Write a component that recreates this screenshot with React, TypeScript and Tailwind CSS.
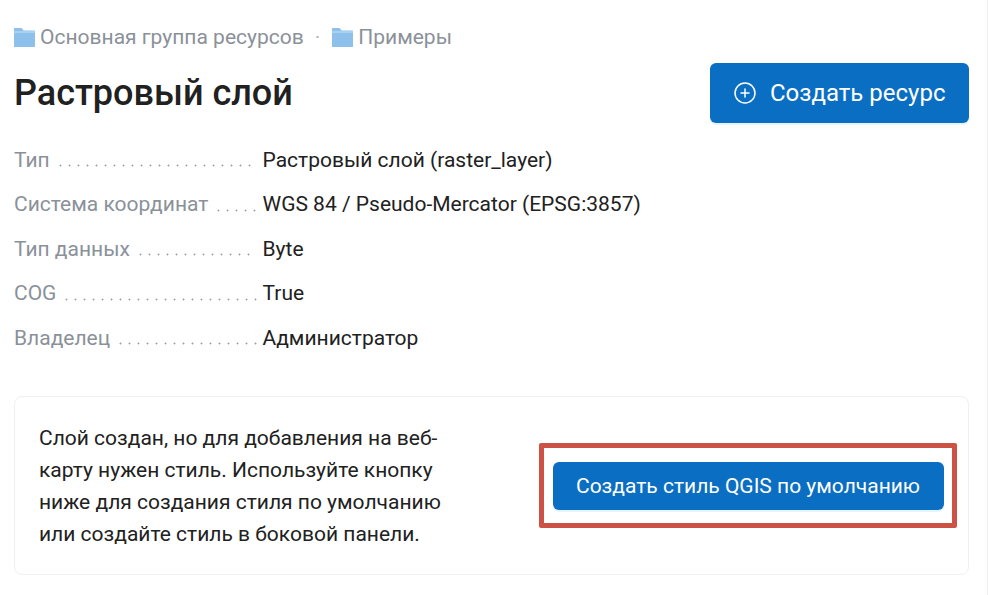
import React from "react";
import { CirclePlus } from "lucide-react";

function Folder() {
  return (
    <svg width="21" height="19" viewBox="0 0 21 19" className="shrink-0">
      <path d="M.6 0H7.6l2 2.4H20.4a.6.6 0 0 1 .6.6V18.4a.6.6 0 0 1-.6.6H.6a.6.6 0 0 1-.6-.6V.6A.6.6 0 0 1 .6 0z" fill="#8dc1ec" />
      <path d="M0 4h21" stroke="#d5e8f8" strokeWidth="0.8" />
    </svg>
  );
}

function Row({ label, value, dots }: { label: string; value: string; dots: string }) {
  return (
    <div className="flex h-[44.5px] items-center">
      <div className="flex w-[248.5px] items-center justify-between">
        <span className="whitespace-nowrap text-[#8a9199]">{label}</span>
        <span
          className={`mt-[12px] h-[3px] bg-[radial-gradient(circle_at_1.5px_1.5px,#959da5_0.8px,transparent_1.15px)] bg-[length:9px_3px] ${dots}`}
        />
      </div>
      <span className="text-[#212121]">{value}</span>
    </div>
  );
}

export default function App() {
  return (
    <div className="relative h-[595px] w-[988px] overflow-hidden border-r border-[#f0f0f0] bg-white pl-[14px] pr-[18px] pt-[21px] font-['Roboto',sans-serif] text-[21px] leading-[32px]">
      <div className="flex items-center text-[#8a9199]">
        <Folder />
        <span className="ml-[5px]">Основная группа ресурсов</span>
        <span className="ml-[11px] mr-[12px] text-[#b0b5ba]">·</span>
        <Folder />
        <span className="ml-[5px]">Примеры</span>
      </div>
      <div className="mt-[10px] flex items-center justify-between">
        <h1 className="text-[36px] font-medium leading-[60px] text-[#212121]">Растровый слой</h1>
        <button className="flex h-[60px] w-[259px] items-center justify-center gap-[12.5px] rounded-[6px] bg-[#0a6ec2] text-[24px] text-white shadow-[0_2px_0_rgba(5,145,255,0.1)]">
          <CirclePlus size={24} strokeWidth={1.5} />
          <span>Создать ресурс</span>
        </button>
      </div>
      <div className="mt-[14.7px]">
        <Row label="Тип" value="Растровый слой (raster_layer)" dots="mr-[11.5px] w-[192px]" />
        <Row label="Система координат" value="WGS 84 / Pseudo-Mercator (EPSG:3857)" dots="mr-[6.5px] w-[39px]" />
        <Row label="Тип данных" value="Byte" dots="mr-[12.5px] w-[111px]" />
        <Row label="COG" value="True" dots="mr-[6px] w-[192px]" />
        <Row label="Владелец" value="Администратор" dots="mr-[5.5px] w-[138px]" />
      </div>
      <div className="mt-[36px] flex h-[179px] items-center justify-between rounded-[8px] border border-[#f0f0f0] pl-[24px] pr-[11px]">
        <p className="w-[420px] text-[#212121]">
          Слой создан, но для добавления на веб-карту нужен стиль. Используйте кнопку ниже для создания стиля по умолчанию или создайте стиль в боковой панели.
        </p>
        <div className="flex h-[85px] w-[418px] items-center justify-center rounded-[2px] border-[5px] border-[#cd5246]">
          <button className="h-[48px] w-[391px] rounded-[6px] bg-[#0a6ec2] text-white shadow-[0_2px_0_rgba(5,145,255,0.1)]">
            Создать стиль QGIS по умолчанию
          </button>
        </div>
      </div>
    </div>
  );
}
